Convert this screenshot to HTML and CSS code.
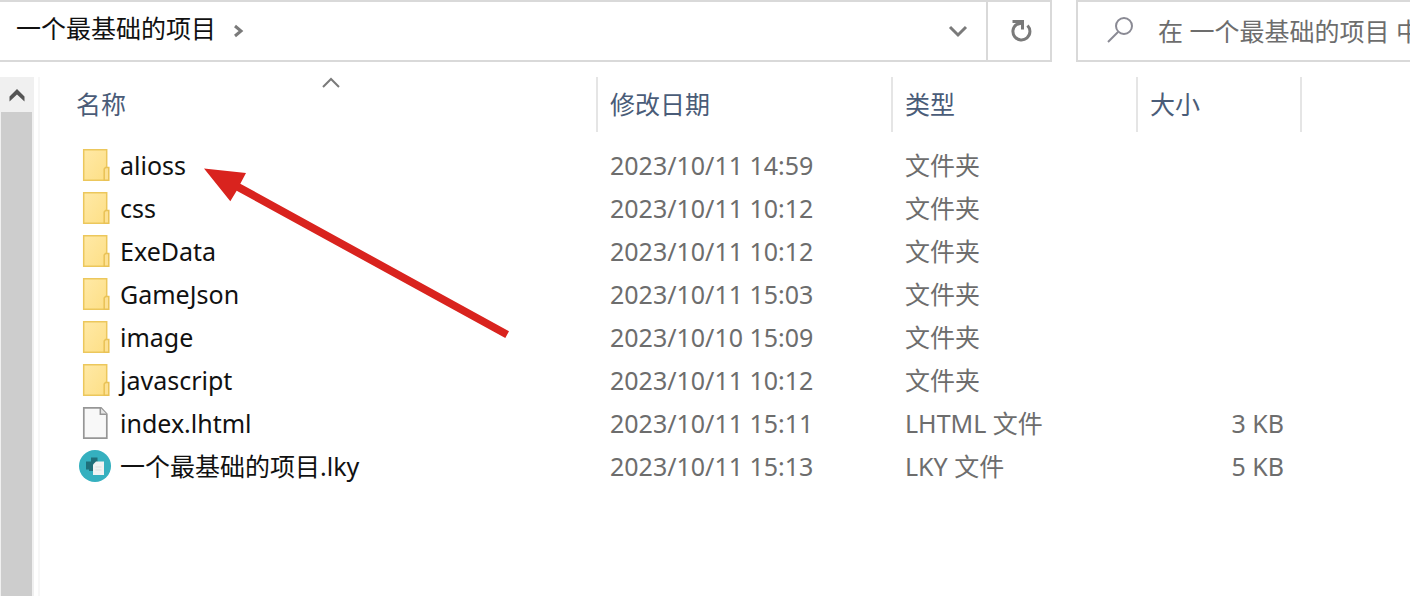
FILE: index.html
```
<!DOCTYPE html>
<html lang="zh-CN">
<head>
  <meta charset="UTF-8" />
  <meta name="viewport" content="width=device-width, initial-scale=1" />
  <title>一个最基础的项目</title>
  <link rel="stylesheet" href="styles.css">
</head>
<body>
  <!-- Shared icons -->
  <svg class="sprite" aria-hidden="true">
    <defs>
      <linearGradient id="folder-fill" x1="0" y1="0" x2="1" y2="1">
        <stop offset="0" stop-color="#ffe9a6" />
        <stop offset="1" stop-color="#fddf86" />
      </linearGradient>
    </defs>
    <symbol id="icon-folder" viewBox="0 0 32 32">
      <path d="M4.7 0.7H27.7V31.3H4.7Z" fill="url(#folder-fill)" stroke="#ecc75c" stroke-width="1.5" />
      <path d="M25.2 31.3V20L26.5 18.5H29.8V31.3Z" fill="#fde193" stroke="#e9c256" stroke-width="1.5" />
    </symbol>
    <symbol id="icon-file" viewBox="0 0 32 32">
      <path d="M4.8 0.8H22L27.8 7V31.2H4.8Z" fill="#f8f8f8" stroke="#969696" stroke-width="1.7" />
      <path d="M21.3 0.8V7.2H27.8" fill="#e6e6e6" stroke="#969696" stroke-width="1.5" />
    </symbol>
    <symbol id="icon-lky" viewBox="0 0 32 32">
      <circle cx="16" cy="16" r="16" fill="#35b0bf" />
      <path d="M12 7.5H18.5V21H10V19.5H7V11.5H12Z" fill="#1f6f7a" />
      <path d="M17 11.5H25V25H14V14.5Z" fill="#f0f2f2" />
      <path d="M16.5 17H22.5M16.5 20H22.5" fill="none" stroke="#dcdfdf" />
    </symbol>
  </svg>

  <div class="toolbar">
    <nav class="address-bar" aria-label="路径">
      <a class="crumb" href="#">一个最基础的项目</a>
      <svg class="crumb-arrow" viewBox="0 0 12 14"><path d="M3 2L9 7L3 12" /></svg>
      <button class="history" type="button" aria-label="历史记录">
        <svg width="20" height="14" viewBox="0 0 20 14"><path d="M2 3L10 11L18 3" /></svg>
      </button>
      <button class="refresh" type="button" aria-label="刷新">
        <svg width="24" height="26" viewBox="0 0 24 26">
          <path d="M18.5 7.5A8.5 8.5 0 1 1 7.5 6.5L12.5 5" />
          <path d="M3.5 3.5H13.5V11.5" />
        </svg>
      </button>
    </nav>
    <label class="search">
      <svg width="28" height="28" viewBox="0 0 28 28"><circle cx="18" cy="9" r="8" /><path d="M12 15L2 25" /></svg>
      <input type="text" placeholder="在 一个最基础的项目 中搜索" aria-label="搜索" />
    </label>
  </div>

  <main>
    <div class="scrollbar">
      <button type="button" aria-label="向上滚动">
        <svg width="16" height="14" viewBox="0 0 16 14"><path d="M0.5 8.5L8 1L15.5 8.5V13.5L8 6.5L0.5 13.5Z" /></svg>
      </button>
      <div class="thumb"></div>
    </div>

    <div class="file-list">
      <table>
        <colgroup>
          <col class="col-name" />
          <col class="col-date" />
          <col class="col-type" />
          <col class="col-size" />
        </colgroup>
        <thead>
          <tr>
            <th scope="col">名称<svg class="sort" width="18" height="12" viewBox="0 0 18 12"><path d="M1 10L9 2L17 10" /></svg></th>
            <th scope="col">修改日期</th>
            <th scope="col">类型</th>
            <th scope="col">大小</th>
          </tr>
        </thead>
        <tbody>
          <tr>
            <td><a href="#"><svg class="icon"><use href="#icon-folder" /></svg>alioss</a></td>
            <td>2023/10/11 14:59</td>
            <td>文件夹</td>
            <td></td>
          </tr>
          <tr>
            <td><a href="#"><svg class="icon"><use href="#icon-folder" /></svg>css</a></td>
            <td>2023/10/11 10:12</td>
            <td>文件夹</td>
            <td></td>
          </tr>
          <tr>
            <td><a href="#"><svg class="icon"><use href="#icon-folder" /></svg>ExeData</a></td>
            <td>2023/10/11 10:12</td>
            <td>文件夹</td>
            <td></td>
          </tr>
          <tr>
            <td><a href="#"><svg class="icon"><use href="#icon-folder" /></svg>GameJson</a></td>
            <td>2023/10/11 15:03</td>
            <td>文件夹</td>
            <td></td>
          </tr>
          <tr>
            <td><a href="#"><svg class="icon"><use href="#icon-folder" /></svg>image</a></td>
            <td>2023/10/10 15:09</td>
            <td>文件夹</td>
            <td></td>
          </tr>
          <tr>
            <td><a href="#"><svg class="icon"><use href="#icon-folder" /></svg>javascript</a></td>
            <td>2023/10/11 10:12</td>
            <td>文件夹</td>
            <td></td>
          </tr>
          <tr>
            <td><a href="#"><svg class="icon"><use href="#icon-file" /></svg>index.lhtml</a></td>
            <td>2023/10/11 15:11</td>
            <td>LHTML 文件</td>
            <td>3 KB</td>
          </tr>
          <tr>
            <td><a href="#"><svg class="icon"><use href="#icon-lky" /></svg>一个最基础的项目.lky</a></td>
            <td>2023/10/11 15:13</td>
            <td>LKY 文件</td>
            <td>5 KB</td>
          </tr>
        </tbody>
      </table>

      <!-- Arrow pointing at the alioss folder -->
      <svg class="pointer" width="306" height="170" viewBox="204 168 306 170" aria-hidden="true">
        <path d="M204 168.5L246 173L240.3 183.7L509 331.3L505.3 338L236.7 190.7L230.3 201.3Z" />
      </svg>
    </div>
  </main>
</body>
</html>
```
FILE: styles.css
```
* {
  margin: 0;
  padding: 0;
  box-sizing: border-box;
}

body {
  font-family: 'Noto Sans', 'Noto Sans CJK SC', sans-serif;
  font-size: 25px;
  line-height: 32px;
  color: #111;
  background-color: #fff;
  min-height: 100vh;
  display: flex;
  flex-direction: column;
}

a {
  color: inherit;
  text-decoration: none;
}

button {
  background: none;
  border: none;
  display: flex;
  justify-content: center;
  align-items: center;
}

svg {
  flex-shrink: 0;
}

.sprite {
  position: absolute;
  width: 0;
  height: 0;
}

/* Top bar */
.toolbar {
  display: flex;
  gap: 24px;
  height: 62px;
}

.address-bar {
  flex: 1;
  display: flex;
  align-items: center;
  border: 2px solid #d9d9d9;
  border-left: none;
  padding-left: 16px;
}

.crumb {
  padding-bottom: 6px;
}

.crumb-arrow {
  width: 12px;
  height: 14px;
  margin-left: 16px;
}

.address-bar path {
  fill: none;
  stroke: #7a7a7a;
  stroke-width: 3;
}

.history {
  width: 56px;
  height: 100%;
  margin-left: auto;
}

.refresh {
  width: 64px;
  height: 100%;
  padding-left: 4px;
  border-left: 2px solid #d9d9d9;
}

.search {
  width: 334px;
  display: flex;
  align-items: center;
  gap: 24px;
  border: 2px solid #d9d9d9;
  border-right: none;
  padding-left: 28px;
}

.search svg {
  fill: none;
  stroke: #8a8a94;
  stroke-width: 2;
}

.search input {
  flex: 1;
  min-width: 0;
  font: inherit;
  border: none;
  outline: none;
}

.search input::placeholder {
  color: #6d6d6d;
}

/* Content */
main {
  flex: 1;
  display: flex;
  padding-top: 15px;
}

.scrollbar {
  width: 34px;
  padding: 0 2px 0 1px;
  display: flex;
  flex-direction: column;
  background-color: #f0f0f0;
}

.scrollbar button {
  height: 35px;
}

.scrollbar path {
  fill: #555;
}

.thumb {
  flex: 1;
  background-color: #cdcdcd;
}

.file-list {
  position: relative;
  flex: 1;
  margin-left: 4px;
  padding-left: 24px;
  border-left: 2px solid #f7f7f7;
}

table {
  table-layout: fixed;
  width: 1238px;
  border-collapse: separate;
  border-spacing: 0;
}

.col-name {
  width: 534px;
}

.col-date {
  width: 295px;
}

.col-type {
  width: 245px;
}

.col-size {
  width: 164px;
}

th {
  position: relative;
  height: 55px;
  padding: 0 0 2px 12px;
  text-align: left;
  font-weight: 400;
  color: #4a5c78;
  border-right: 2px solid #e5e5e5;
}

.sort {
  position: absolute;
  top: 0;
  left: 50%;
  margin-left: -8px;
  fill: none;
  stroke: #7a7a7a;
  stroke-width: 2;
}

tbody::before {
  content: '';
  display: block;
  height: 11px;
}

td {
  height: 43px;
  padding-left: 12px;
  color: #6d6d6d;
  white-space: nowrap;
}

td:first-child {
  padding-left: 15px;
  color: #111;
}

td:last-child {
  padding-right: 18px;
  text-align: right;
}

td a {
  display: flex;
  align-items: center;
  gap: 9px;
}

.icon {
  width: 32px;
  height: 32px;
}

.pointer {
  position: absolute;
  top: 91px;
  left: 164px;
  fill: #d9231e;
}
```
